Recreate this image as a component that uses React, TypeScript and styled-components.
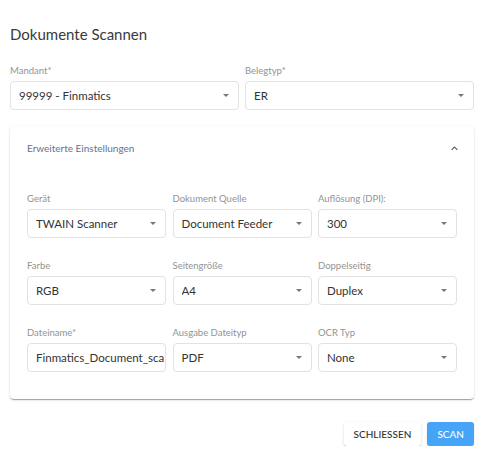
import styled, { createGlobalStyle } from "styled-components";

const GlobalStyle = createGlobalStyle`
    html, body {
        margin: 0;
        padding: 0;
        background: #fff;
    }
    body {
        font-family: Lato, "Open Sans", "Liberation Sans", sans-serif;
        color: #333;
    }
`;

const Dialog = styled.div`
    width: 484px;
    box-sizing: border-box;
    padding: 24px 10px 0;
`;

const Title = styled.h2`
    margin: 0;
    font-size: 15px;
    font-weight: 400;
    line-height: 20px;
    color: #3a3a3a;
`;

const TopRow = styled.div`
    display: grid;
    grid-template-columns: 1fr 1fr;
    gap: 6px;
    margin-top: 21px;
`;

const Field = styled.div`
    display: flex;
    flex-direction: column;
    gap: 4px;
    min-width: 0;
`;

const Label = styled.label`
    font-size: 9.5px;
    line-height: 12px;
    color: #939393;
    white-space: nowrap;
`;

const SelectBox = styled.div<{ $input?: boolean }>`
    height: 29px;
    box-sizing: border-box;
    border: 1px solid #e2e2e2;
    border-radius: 4px;
    background: #fff;
    display: flex;
    align-items: center;
    padding: ${(p) => (p.$input ? "0 1px 0 8px" : "0 9px 0 8px")};
    font-size: 11.5px;
    color: #333;
    overflow: hidden;
`;

const Value = styled.span`
    flex: 1;
    white-space: nowrap;
    overflow: hidden;
`;

const Caret = styled.span`
    width: 0;
    height: 0;
    border-left: 3.5px solid transparent;
    border-right: 3.5px solid transparent;
    border-top: 3.5px solid #777;
    margin-left: 6px;
    flex-shrink: 0;
`;

const Card = styled.section`
    margin-top: 16px;
    border-radius: 4px;
    background: #fff;
    box-shadow: 0 2px 1px -1px rgba(0, 0, 0, 0.2), 0 1px 1px 0 rgba(0, 0, 0, 0.14),
        0 1px 3px 0 rgba(0, 0, 0, 0.12);
`;

const CardHeader = styled.div`
    height: 44px;
    padding: 0 13px 0 17px;
    display: flex;
    align-items: center;
    justify-content: space-between;
`;

const CardTitle = styled.span`
    font-size: 10px;
    color: #64738f;
`;

const CardBody = styled.div`
    padding: 23px 17px 27px;
    display: grid;
    grid-template-columns: repeat(3, 1fr);
    column-gap: 6.5px;
    row-gap: 22px;
`;

const Actions = styled.div`
    display: flex;
    justify-content: flex-end;
    gap: 6px;
    margin-top: 23px;
`;

const Button = styled.button<{ $primary?: boolean }>`
    height: 24px;
    padding: 0 10px;
    border: none;
    border-radius: 3px;
    font-family: inherit;
    font-size: 10px;
    font-weight: 500;
    text-transform: uppercase;
    cursor: pointer;
    background: ${(p) => (p.$primary ? "#45a4f5" : "#fff")};
    color: ${(p) => (p.$primary ? "#fff" : "#333")};
    box-shadow: ${(p) =>
        p.$primary
            ? "0 1px 2px rgba(0,0,0,0.15)"
            : "0 2px 1px -1px rgba(0,0,0,0.2), 0 1px 1px 0 rgba(0,0,0,0.14), 0 1px 3px 0 rgba(0,0,0,0.12)"};
`;

type FieldDef = { label: string; value: string; input?: boolean };

const fields: FieldDef[] = [
    { label: "Gerät", value: "TWAIN Scanner" },
    { label: "Dokument Quelle", value: "Document Feeder" },
    { label: "Auflösung (DPI):", value: "300" },
    { label: "Farbe", value: "RGB" },
    { label: "Seitengröße", value: "A4" },
    { label: "Doppelseitig", value: "Duplex" },
    { label: "Dateiname*", value: "Finmatics_Document_scan", input: true },
    { label: "Ausgabe Dateityp", value: "PDF" },
    { label: "OCR Typ", value: "None" },
];

const SelectField = ({ label, value, input }: FieldDef) => (
    <Field>
        <Label>{label}</Label>
        <SelectBox $input={input}>
            <Value>{value}</Value>
            {!input && <Caret />}
        </SelectBox>
    </Field>
);

const ChevronUp = () => (
    <svg width="13" height="13" viewBox="0 0 24 24">
        <path d="M12 8l-6 6 1.41 1.41L12 10.83l4.59 4.58L18 14z" fill="#555" />
    </svg>
);

export default function App() {
    return (
        <>
            <GlobalStyle />
            <Dialog>
                <Title>Dokumente Scannen</Title>
                <TopRow>
                    <SelectField label="Mandant*" value="99999 - Finmatics" />
                    <SelectField label="Belegtyp*" value="ER" />
                </TopRow>

                {/* Erweiterte Einstellungen */}
                <Card>
                    <CardHeader>
                        <CardTitle>Erweiterte Einstellungen</CardTitle>
                        <ChevronUp />
                    </CardHeader>
                    <CardBody>
                        {fields.map((f) => (
                            <SelectField key={f.label} {...f} />
                        ))}
                    </CardBody>
                </Card>

                <Actions>
                    <Button>Schliessen</Button>
                    <Button $primary>Scan</Button>
                </Actions>
            </Dialog>
        </>
    );
}
